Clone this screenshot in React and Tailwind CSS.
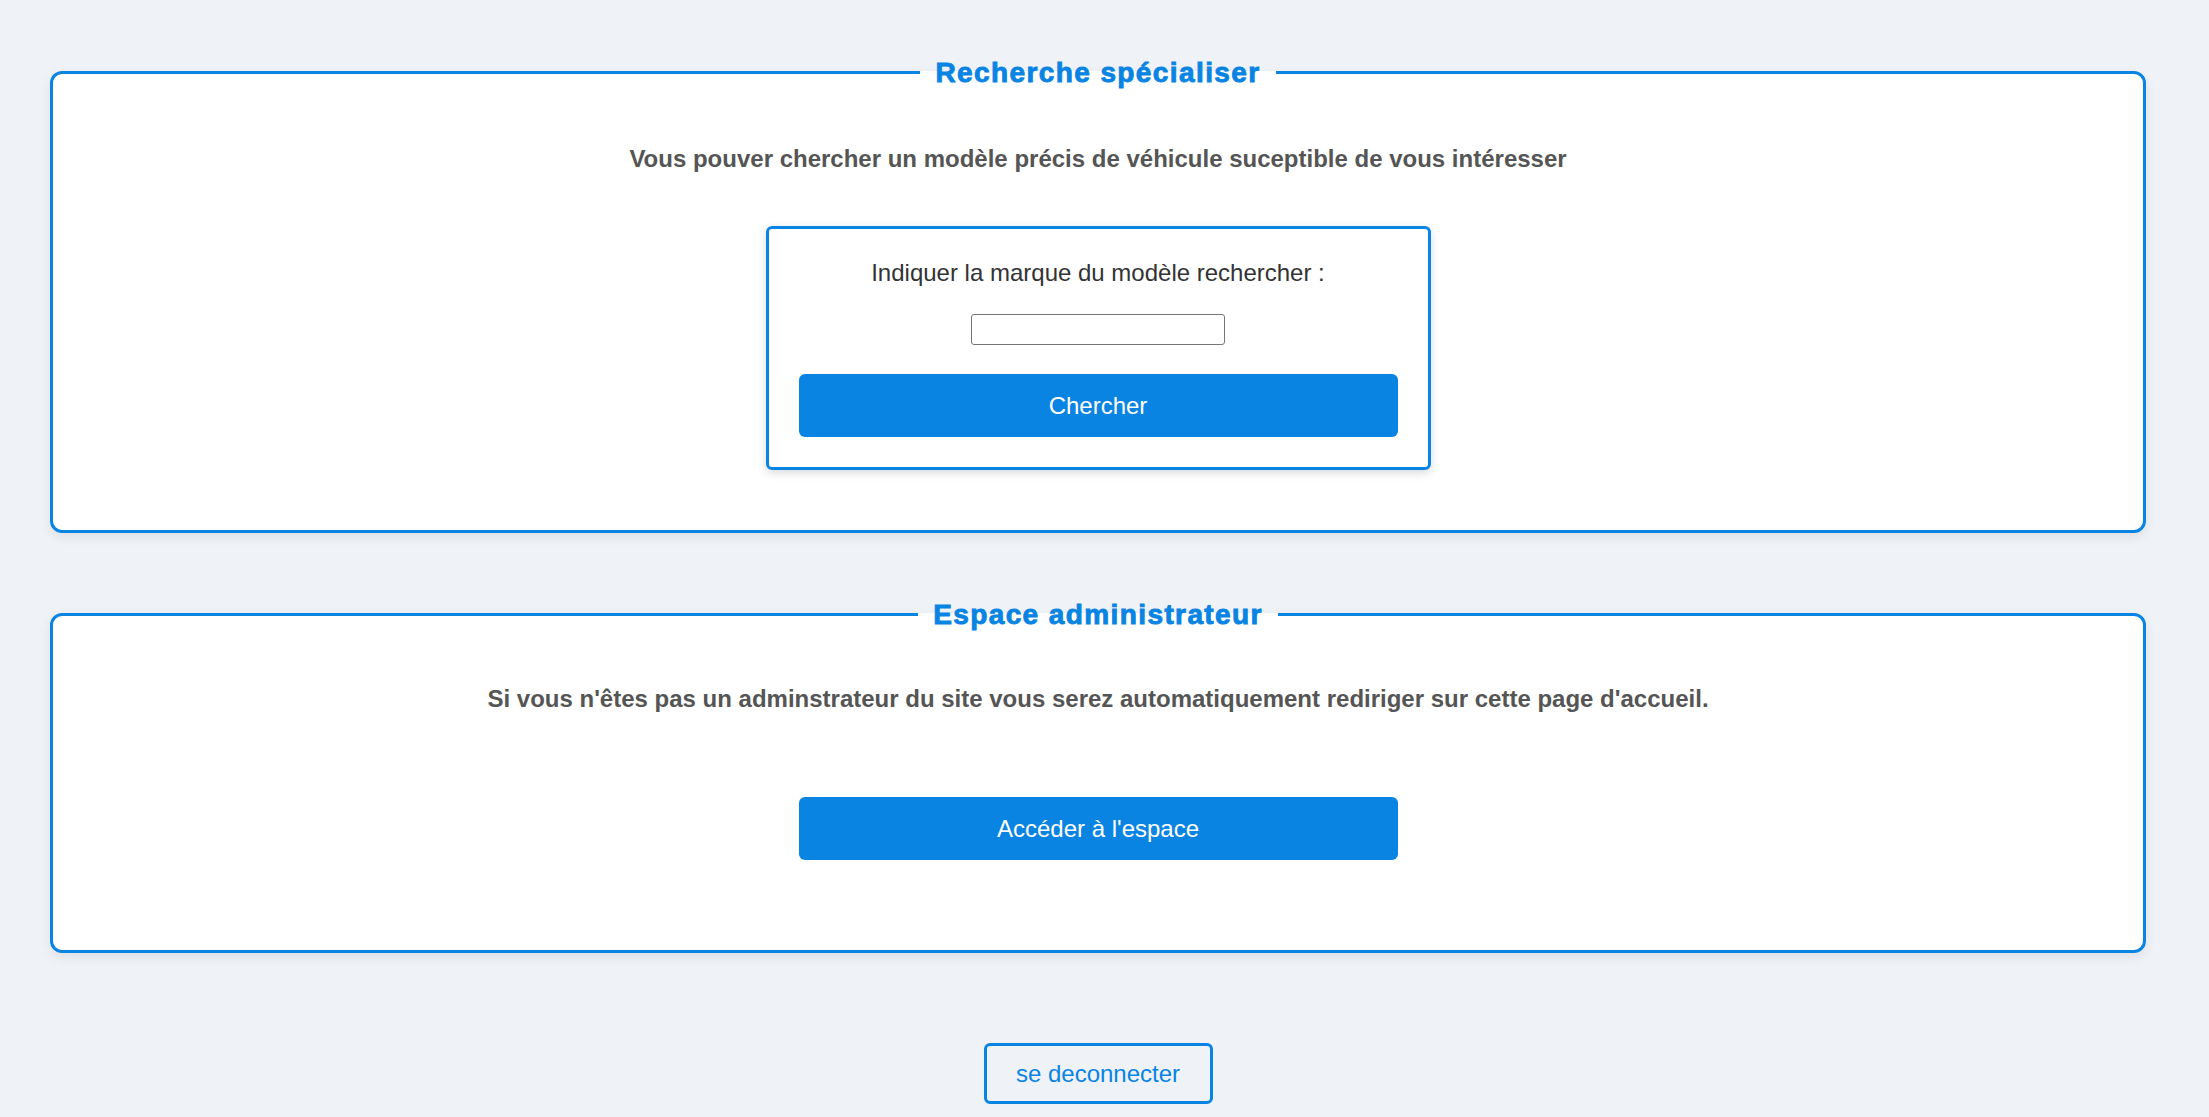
export default function App() {
  return (
    <div className="min-h-screen w-full bg-[#eff2f7] font-['Liberation_Sans',Arial,sans-serif] overflow-hidden">
      <div className="w-[2196px] px-[50px] pt-[55px] pb-[13px] flex flex-col">
        <fieldset className="border-[3px] border-[#0984e3] rounded-[12px] bg-white shadow-[0_4px_12px_rgba(0,0,0,0.08)] pt-[54px] pb-[60px] flex flex-col items-center">
          <legend className="mx-auto px-[15px] pt-[2px] text-[28px] leading-[32px] font-bold tracking-[1.4px] text-[#0984e3] [-webkit-text-stroke:0.9px_#0984e3]">
            Recherche spécialiser
          </legend>
          <p className="m-0 text-[24px] leading-[32px] font-bold text-[#555] text-center">
            Vous pouver chercher un modèle précis de véhicule suceptible de vous intéresser
          </p>
          <div className="mt-[51px] w-[665px] border-[3px] border-[#0984e3] rounded-[6px] bg-white shadow-[0_3px_10px_rgba(0,0,0,0.15)] pt-[29px] pb-[30px] px-[30px] flex flex-col items-center">
            <label className="text-[24px] leading-[30px] text-[#333]">
              Indiquer la marque du modèle rechercher :
            </label>
            <input
              type="text"
              className="mt-[26px] w-[254px] h-[31px] border border-[#767676] rounded-[3px] bg-white"
            />
            <button className="mt-[29px] w-full h-[63px] rounded-[6px] bg-[#0984e3] text-white text-[24px]">
              Chercher
            </button>
          </div>
        </fieldset>

        <fieldset className="mt-[64px] border-[3px] border-[#0984e3] rounded-[12px] bg-white shadow-[0_4px_12px_rgba(0,0,0,0.08)] pt-[52px] pb-[90px] flex flex-col items-center">
          <legend className="mx-auto px-[15px] pt-[2px] text-[28px] leading-[32px] font-bold tracking-[1.4px] text-[#0984e3] [-webkit-text-stroke:0.9px_#0984e3]">
            Espace administrateur
          </legend>
          <p className="m-0 text-[24px] leading-[32px] font-bold text-[#555] text-center">
            Si vous n'êtes pas un adminstrateur du site vous serez automatiquement rediriger sur cette page d'accueil.
          </p>
          <button className="mt-[82px] w-[599px] h-[63px] rounded-[6px] bg-[#0984e3] text-white text-[24px]">
            Accéder à l'espace
          </button>
        </fieldset>

        <div className="mt-[90px] flex justify-center">
          <button className="w-[229px] h-[61px] border-[3px] border-[#0984e3] rounded-[6px] bg-transparent text-[#0984e3] text-[24px]">
            se deconnecter
          </button>
        </div>
      </div>
    </div>
  );
}
